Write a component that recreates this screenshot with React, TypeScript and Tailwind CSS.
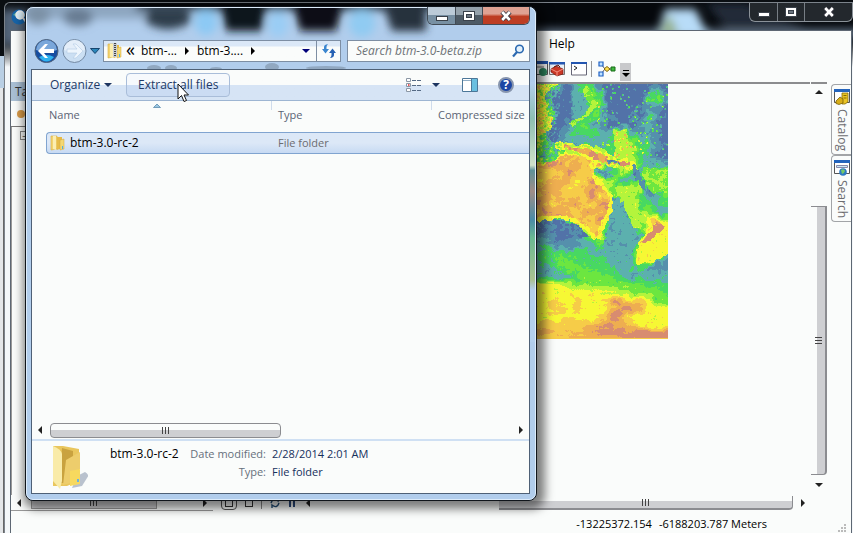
import type { ReactNode } from "react";

const PALETTE = ["#5272a8", "#5590ac", "#5cb0ae", "#48d862", "#6ce640", "#b4f43c", "#f6f834", "#f6cc48", "#eeae50", "#d88c70"];

// Sea floor heights as palette steps, one digit for every 8 pixels.
const HEIGHTS = [
  "76510243000000000",
  "74110224300000130",
  "65000224400000342",
  "75100223400001110",
  "77200224310010310",
  "63101342100001210",
  "62012333225421210",
  "54012222232552210",
  "43322233233553310",
  "42355555532653200",
  "45577788826562222",
  "77778872223532344",
  "78878877654224345",
  "88888877653555024",
  "88888888644454124",
  "78788888612553323",
  "55567888612255422",
  "11123578522235685",
  "00012567422224687",
  "11100134522212866",
  "22111122422222876",
  "23333332222225663",
  "23344333322225521",
  "22234443332223111",
  "22222344443222222",
  "66655444444444333",
  "66666666655544443",
  "66766766679777644",
  "66776766678998666",
  "66666666789766666",
  "67777778898876666",
  "88877788999999999",
  "77777888888999999",
];

type Shape = { step: number; points: [number, number][] };

// Coasts and ridges that need a sharper edge than the grid above gives.
const SHAPES: Shape[] = [
  { step: 6, points: [[0, 0], [17, 2], [7, 11], [8, 28], [16, 34], [14, 45], [0, 52]] },
  { step: 1.8, points: [[36, 6], [47, 9], [49, 30], [36, 34]] },
  { step: 4.6, points: [[49, 0], [56, 9], [60, 22], [54, 31], [35, 41], [34, 37], [49, 31], [53, 21], [47, 6]] },
  { step: 5, points: [[77, 46], [90, 46], [95, 73], [79, 74]] },
  { step: 4.4, points: [[106, 83], [132, 84], [132, 106], [116, 110], [108, 96]] },
  { step: 1.8, points: [[76, 113], [84, 113], [94, 139], [100, 163], [84, 176], [67, 163], [74, 129]] },
  { step: 5, points: [[77, 103], [94, 100], [103, 120], [105, 146], [97, 142], [86, 119]] },
  { step: 0.4, points: [[0, 137], [21, 135], [38, 139], [54, 153], [34, 151], [0, 146]] },
  { step: 6.2, points: [[0, 80], [14, 78], [30, 66], [54, 70], [61, 79], [56, 88], [66, 99], [76, 111], [76, 126], [69, 140], [64, 155], [57, 155], [49, 145], [34, 136], [21, 134], [0, 137]] },
  { step: 7.8, points: [[0, 84], [30, 70], [53, 74], [54, 86], [60, 98], [73, 112], [71, 127], [63, 142], [60, 152], [51, 141], [34, 132], [0, 132]] },
  { step: 5.6, points: [[20, 57], [60, 62], [78, 73], [96, 77], [102, 86], [90, 84], [66, 81], [56, 76], [20, 64]] },
  { step: 8.6, points: [[27, 60], [57, 66], [72, 75], [92, 79], [92, 81], [68, 79], [56, 72], [27, 63]] },
  { step: 1, points: [[67, 74], [79, 77], [84, 80], [72, 79]] },
  { step: 1.6, points: [[56, 85], [70, 85], [79, 93], [66, 93]] },
  { step: 0.8, points: [[96, 80], [104, 88], [108, 100], [112, 108], [106, 104], [98, 92]] },
  { step: 6, points: [[99, 180], [102, 159], [119, 136], [132, 139], [132, 168], [117, 178]] },
  { step: 8.8, points: [[104, 159], [116, 146], [119, 134], [129, 143], [110, 158]] },
];

const MAP_WIDTH = 132;
const MAP_HEIGHT = 255;

function hash(x: number, y: number) {
  let h = (x * 374761393 + y * 668265263) | 0;
  h = Math.imul(h ^ (h >>> 13), 1274126177);
  return ((h ^ (h >>> 16)) >>> 0) / 4294967296;
}

function noise(x: number, y: number) {
  const ix = Math.floor(x);
  const iy = Math.floor(y);
  const fx = x - ix;
  const fy = y - iy;
  const a = hash(ix, iy) * (1 - fx) + hash(ix + 1, iy) * fx;
  const b = hash(ix, iy + 1) * (1 - fx) + hash(ix + 1, iy + 1) * fx;
  return a * (1 - fy) + b * fy - 0.5;
}

function sample(x: number, y: number) {
  const gx = Math.max(0, Math.min(15.99, x / 8));
  const gy = Math.max(0, Math.min(31.99, y / 8));
  const ix = Math.floor(gx);
  const iy = Math.floor(gy);
  const fx = gx - ix;
  const fy = gy - iy;
  const v = (r: number, c: number) => Number(HEIGHTS[r][c]);
  return (v(iy, ix) * (1 - fx) + v(iy, ix + 1) * fx) * (1 - fy) + (v(iy + 1, ix) * (1 - fx) + v(iy + 1, ix + 1) * fx) * fy;
}

function inside(points: [number, number][], x: number, y: number) {
  let hit = false;
  for (let i = 0, j = points.length - 1; i < points.length; j = i++) {
    const [xi, yi] = points[i];
    const [xj, yj] = points[j];
    if (yi > y !== yj > y && x < ((xj - xi) * (y - yi)) / (yj - yi) + xi) hit = !hit;
  }
  return hit;
}

function stepAt(x: number, y: number) {
  if (y > MAP_HEIGHT - 2) return 7;
  const polar = y > 198;
  const wx = x + noise(x / 5, y / 5) * 7;
  const wy = y + noise(x / 5 + 40, y / 5 + 9) * (polar ? 4 : 7);
  let h = sample(wx, wy);
  const sx = Math.max(1, x + noise(x / 3, y / 3) * 4);
  const sy = Math.max(1, y + noise(x / 3 + 20, y / 3 + 5) * 4);
  for (const shape of SHAPES) if (inside(shape.points, sx, sy)) h = shape.step;
  h += noise(x / (polar ? 7 : 3), y / 2.2) * 1.3;
  if (h > 7 && !polar) h += noise(x / 8 + 3, y / 8 + 3) * 2.6;
  if (y < 75 && x > 60 && hash(x >> 1, y >> 1) > 0.93) h += 2.5 * hash(y, x) + 1;
  if (x < 24 && y < 80) h += noise(x / 1.5, y / 1.5) * 4;
  h += (hash(x, y) - 0.5) * 0.3;
  return Math.max(0, Math.min(9, Math.round(h)));
}

function buildTerrain() {
  const paths = PALETTE.map(() => "");
  for (let y = 0; y < MAP_HEIGHT; y++) {
    let start = 0;
    let last = stepAt(0, y);
    for (let x = 1; x <= MAP_WIDTH; x++) {
      const step = x < MAP_WIDTH ? stepAt(x, y) : -1;
      if (step !== last) {
        paths[last] += `M${start} ${y}h${x - start}v1h${start - x}z`;
        start = x;
        last = step;
      }
    }
  }
  return paths;
}

const TERRAIN = buildTerrain();

function Terrain() {
  return (
    <svg className="block h-[255px] w-[132px] shrink-0" viewBox="0 0 132 255" shapeRendering="crispEdges" role="img" aria-label="Bathymetry map">
      {TERRAIN.map((d, i) => (
        <path key={i} d={d} fill={PALETTE[i]} />
      ))}
    </svg>
  );
}

function Triangle({ dir, className = "fill-[#222]" }: { dir: "up" | "down" | "left" | "right"; className?: string }) {
  const d = { up: "M0 6L4 2L8 6z", down: "M0 2L4 6L8 2z", left: "M6 0L2 4L6 8z", right: "M2 0L6 4L2 8z" }[dir];
  return (
    <svg className={`size-2 shrink-0 ${className}`} viewBox="0 0 8 8" aria-hidden="true">
      <path d={d} />
    </svg>
  );
}

function Grip({ vertical = false }: { vertical?: boolean }) {
  return (
    <span className={`flex gap-px ${vertical ? "flex-col" : ""}`}>
      {[0, 1, 2].map((n) => (
        <span key={n} className={`border-[#444] ${vertical ? "h-0.5 w-[7px] border-t" : "h-[7px] w-0.5 border-l"}`} />
      ))}
    </span>
  );
}

function CaptionIcon({ kind }: { kind: "min" | "max" | "close" }) {
  return (
    <svg width="14" height="12" viewBox="0 0 14 12" aria-hidden="true">
      {kind === "min" && <rect x="1.5" y="6.5" width="11" height="4" fill="#fff" stroke="#3a414a" />}
      {kind === "max" && (
        <>
          <rect x="1.5" y="1.5" width="11" height="9" fill="#fff" stroke="#3a414a" />
          <rect x="4.5" y="4.5" width="5" height="3" fill="#6b7580" stroke="#3a414a" />
        </>
      )}
      {kind === "close" && (
        <>
          <path d="M3 2L11 10M11 2L3 10" stroke="#3a3a44" strokeWidth="4.5" />
          <path d="M3.2 2L10.8 10M10.8 2L3.2 10" stroke="#fff" strokeWidth="2.6" />
        </>
      )}
    </svg>
  );
}

function BackWindow() {
  return (
    <section className="absolute top-[2px] right-0 bottom-0 left-1 flex flex-col overflow-hidden rounded-tl-md border-t border-l border-[#7c838b] bg-gradient-to-b from-[#05080c] from-[34px] to-[#f4f7f9] to-[64px]">
      <svg className="absolute top-0 left-0 h-14 w-full" aria-hidden="true">
        <defs>
          <filter id="glass-back" x="-40%" y="-60%" width="180%" height="220%">
            <feGaussianBlur stdDeviation="4" />
          </filter>
        </defs>
        <g filter="url(#glass-back)">
          <rect x="-5" y="6" width="32" height="36" fill="#53657a" />
          <rect x="500" y="26" width="360" height="9" fill="#66788c" />
          <path d="M652 34L660 6H690L704 34z" fill="#b8dcf8" />
          <path d="M654 32L664 10L674 32z" fill="#94b088" />
          <path d="M700 0H740L800 24H720z" fill="#202a38" />
        </g>
      </svg>
      <header className="relative flex h-[27px] shrink-0 items-start justify-between pl-1.5">
        <svg className="mt-1.5 size-4" viewBox="0 0 16 16" aria-hidden="true">
          <circle cx="8" cy="8" r="7.5" fill="#1764a8" />
          <path d="M2 6q5-6 12 0q-3 4-12 0z" fill="#5fae9c" />
          <circle cx="9" cy="6" r="4" fill="#d9eef8" stroke="#eee" strokeWidth="1.5" />
          <path d="M12 9L15 13" stroke="#ddd" strokeWidth="2" />
        </svg>
        <div className="flex h-[19px] rounded-b-md border border-t-0 border-[#8b9299] bg-[#23282d]">
          <button aria-label="Minimize main window" className="flex w-7 items-center justify-center border-r border-[#777e85]"><CaptionIcon kind="min" /></button>
          <button aria-label="Maximize main window" className="flex w-[27px] items-center justify-center border-r border-[#777e85]"><CaptionIcon kind="max" /></button>
          <button aria-label="Close main window" className="flex w-[47px] items-center justify-center"><CaptionIcon kind="close" /></button>
        </div>
      </header>
      <div className="relative mr-px ml-[5px] flex flex-1 flex-col border border-b-0 border-[#5d6773] bg-[#fafcfb]">
        <nav className="flex h-[26px] shrink-0 items-center pl-[538px] text-black"><button>Help</button></nav>
        <div className="flex h-[25px] shrink-0 items-center pb-0.5 pl-[521px]">
          <svg width="16" height="16" viewBox="0 0 16 16" aria-hidden="true">
            <path d="M.5.5h15v13H.5z" fill="#fff" stroke="#555" /><path d="M0 0h16v3H0z" fill="#2456b0" /><circle cx="11" cy="11" r="4" fill="#2f8a62" /><path d="M4 6h8" stroke="#777" />
          </svg>
          <svg className="ml-px" width="16" height="16" viewBox="0 0 16 16" aria-hidden="true">
            <path d="M.5 1.500h15v12H.5z" fill="#e8f0f8" stroke="#777" /><path d="M0 1h16v2.500H0z" fill="#2456b0" />
            <path d="M2 8l5-3 7 3v5l-6 2-6-4z" fill="#cc3826" stroke="#74170f" strokeWidth=".7" /><path d="M2 8l6 3 6-3M8 11v4" fill="none" stroke="#f49080" /><path d="M5 6l4-2 2 2" fill="none" stroke="#631810" />
          </svg>
          <svg className="ml-1.5" width="16" height="14" viewBox="0 0 16 14" aria-hidden="true">
            <path d="M.5.5h15v12.500H.5z" fill="#fff" stroke="#667" /><path d="M0 0h16v2H0z" fill="#2456b0" /><path d="M3 4l3 2-3 2" fill="none" stroke="#222" />
          </svg>
          <span className="ml-1 h-4 w-px bg-[#999]" />
          <svg className="ml-1.5" width="18" height="16" viewBox="0 0 18 16" aria-hidden="true">
            <path d="M3 3l4 5M3 13l4-5h7" stroke="#555" fill="none" />
            <path d="M1 1h4v4H1zM1 11h4v4H1z" fill="#bfe2ff" stroke="#1f61c4" strokeWidth="1.200" /><path d="M6 8l3-2.500L12 8l-3 2.500z" fill="#ffdf4a" stroke="#7e6512" /><path d="M13 6h4v4h-4z" fill="#3fb93f" stroke="#176b17" />
          </svg>
          <button aria-label="Toolbar options" className="mt-1.5 ml-1 flex h-[18px] w-[11px] flex-col items-center justify-end bg-[#c8c9cb] pb-0.5">
            <span className="h-px w-1.5 bg-black" /><Triangle dir="down" className="fill-black" />
          </button>
        </div>
        <div className="flex flex-1">
          <aside className="flex w-[202px] flex-col">
            <h2 className="flex h-[19px] items-center bg-[#a9bfd4] pl-1 text-[#333]">Table</h2>
            <div className="flex h-[26px] items-center border-b border-[#777] pl-1.5"><span className="size-2 rounded-full bg-[#d89a48]" /></div>
            <div className="flex-1 border-l border-[#999] pt-1 pl-2"><span className="block size-[9px] border border-[#888] text-center text-[8px] leading-[7px]">−</span></div>
            <div className="flex h-4 items-center border-b border-[#999] pl-1">
              <Triangle dir="left" />
              <span className="ml-2 flex h-3 w-[126px] items-center justify-center border border-[#999] bg-[#d2d2d4]"><Grip /></span>
              <span className="ml-auto pr-1"><Triangle dir="right" /></span>
            </div>
          </aside>
          <main className="ml-1 flex min-w-0 flex-1 flex-col">
            <div className="flex min-h-0 flex-1">
              <div className="min-w-0 flex-1 border-t-2 border-[#8b8c8e] pl-[319px]"><Terrain /></div>
              <div className="ml-px flex w-4 flex-col items-center border-t-2 border-[#8b8c8e] pt-1">
                <Triangle dir="up" />
                <div className="mt-[110px] ml-auto flex w-full flex-1 items-center justify-center rounded-br border-y border-r-2 border-[#8b8c90] bg-gradient-to-r from-[#fafcfb] from-45% to-[#cecfd2] to-45%"><Grip vertical /></div>
                <span className="my-1.5 flex"><Triangle dir="down" /></span>
              </div>
            </div>
            <div className="flex h-4 items-center text-[#234]">
              <span className="ml-1 flex h-3.5 w-4 items-center justify-center rounded-sm border border-[#555]"><span className="size-2 border border-[#333]" /></span>
              <span className="ml-2 h-2 w-2 border border-[#333]" />
              <span className="ml-2 h-3 w-px bg-[#888]" />
              <svg className="ml-2" width="10" height="10" viewBox="0 0 10 10" aria-hidden="true"><path d="M1 5q2-6 7-2V0M9 5q-2 6-7 2v3" fill="none" stroke="#234e78" strokeWidth="1.400" /></svg>
              <svg className="ml-2" width="8" height="8" viewBox="0 0 8 8" aria-hidden="true"><path d="M1 0h2v8H1zM5 0h2v8H5z" fill="#2c4a7c" /></svg>
              <span className="ml-2 flex"><Triangle dir="left" /></span>
              <div className="ml-auto flex h-3.5 w-[294px] items-center justify-center rounded-br border-r border-b-2 border-[#8b8c90] bg-gradient-to-b from-[#fafcfb] from-45% to-[#cecfd2] to-45%"><Grip /></div>
              <span className="mr-5 ml-1.5 flex"><Triangle dir="right" /></span>
            </div>
          </main>
          <aside className="ml-1 flex w-5 flex-col pt-0.5">
            <button className="flex h-[71px] w-full flex-col items-center rounded-l border border-r-0 border-[#a2a4a7] pt-1">
              <svg width="16" height="16" viewBox="0 0 16 16" className="shrink-0" aria-hidden="true">
                <path d="M.5.5h15v13H.5z" fill="#fff" stroke="#555" /><path d="M0 0h16v3H0z" fill="#2464bc" />
                <path d="M8 4h6v9l-3 2H8z" fill="#e9c424" stroke="#846a08" strokeWidth=".8" /><path d="M9.500 6.500h3M9.500 9h3" stroke="#846a08" /><path d="M2 12l4-4 3 2v4l-4 1.500-3-1z" fill="#d8ae18" stroke="#7a6108" strokeWidth=".8" />
              </svg>
              <span className="mt-1 leading-4 text-[#6c6c70] [writing-mode:vertical-rl]">Catalog</span>
            </button>
            <button className="flex h-[67px] w-full flex-col items-center rounded-l border border-r-0 border-[#a2a4a7] pt-1">
              <svg width="16" height="16" viewBox="0 0 16 16" className="shrink-0" aria-hidden="true">
                <path d="M.5.5h15v13H.5z" fill="#fff" stroke="#555" /><path d="M0 0h16v3H0z" fill="#2464bc" /><path d="M2.500 5.500h11v2h-11z" fill="#c9eaf4" stroke="#88a" /><circle cx="9" cy="12" r="3.800" fill="#2d7ac2" /><path d="M7 10q3-2 4 1q-1 3-3 3z" fill="#75ca68" />
              </svg>
              <span className="mt-1 leading-4 text-[#6c6c70] [writing-mode:vertical-rl]">Search</span>
            </button>
          </aside>
        </div>
        <footer className="flex h-[22px] shrink-0 items-center justify-end gap-[7px] pt-1 pr-1 text-[11px] text-black">
          <span>-13225372.154</span>
          <span>-6188203.787 Meters</span>
          <svg className="mt-2 ml-16" width="9" height="9" viewBox="0 0 9 9" aria-hidden="true"><path d="M6 0h2v2H6zM3 3h2v2H3zM6 3h2v2H6zM0 6h2v2H0zM3 6h2v2H3zM6 6h2v2H6z" fill="#bbb" /></svg>
        </footer>
      </div>
    </section>
  );
}

function FrontGlass() {
  return (
    <svg className="absolute top-0 left-0 h-full w-full" aria-hidden="true">
      <defs>
        <filter id="glass-front" x="-40%" y="-60%" width="180%" height="220%">
          <feGaussianBlur stdDeviation="4" />
        </filter>
        <linearGradient id="glass-edge" x1="0" y1="0" x2="0" y2="1">
          <stop offset="0" stopColor="#b4cfee" /><stop offset=".14" stopColor="#8dbfb2" /><stop offset=".32" stopColor="#cfe0c8" />
          <stop offset=".34" stopColor="#5f9298" /><stop offset=".42" stopColor="#a08e88" /><stop offset=".53" stopColor="#4a8ca6" />
          <stop offset=".6" stopColor="#6aba92" /><stop offset=".76" stopColor="#aac090" /><stop offset=".8" stopColor="#b4d0ee" />
        </linearGradient>
      </defs>
      <g filter="url(#glass-front)">
        <path d="M-5 -8H120V12H-5z" fill="#8da6c0" />
        <ellipse cx="52" cy="10" rx="15" ry="9" fill="#687c92" />
        <ellipse cx="12" cy="8" rx="12" ry="10" fill="#7c91a6" />
        <ellipse cx="142" cy="11" rx="23" ry="11" fill="#2f3d4c" />
        <path d="M110 -10H480V4H110z" fill="#3a4b5c" />
        <path d="M192 -12H242L236 24H200z" fill="#0c131b" />
        <path d="M264 -12H320L310 24H274z" fill="#0a1119" />
        <path d="M354 -12H400V24H366z" fill="#28333c" />
        <ellipse cx="180" cy="15" rx="11" ry="13" fill="#8cc9f4" />
        <ellipse cx="252" cy="17" rx="10" ry="13" fill="#9acdf5" />
        <ellipse cx="336" cy="16" rx="13" ry="14" fill="#90cbf2" />
      </g>
      <g fill="#7d90a6" opacity=".6">
        <ellipse cx="128" cy="61" rx="7" ry="3" /><ellipse cx="145" cy="61" rx="6" ry="3" /><ellipse cx="246" cy="60" rx="7" ry="4" /><ellipse cx="190" cy="62" rx="6" ry="2" /><ellipse cx="300" cy="61" rx="20" ry="2" />
      </g>
      <rect x="504" y="75" width="5" height="260" fill="url(#glass-edge)" />
    </svg>
  );
}

function Crumb({ children }: { children: ReactNode }) {
  return (
    <button className="flex items-center gap-1.5 text-black">
      {children}
      <Triangle dir="right" className="fill-black" />
    </button>
  );
}

function SmallFolder({ zip = false }: { zip?: boolean }) {
  return (
    <svg width="15" height="16" viewBox="0 0 15 16" className="shrink-0" aria-hidden="true">
      <path d="M1 1h6v13l-6 1z" fill="#f2d472" stroke="#d9ad3e" strokeWidth=".6" />
      <path d="M7 2h5v11l-5 2z" fill="#e6bb48" /><path d="M3 1h3v14l-3-1z" fill="#fbeeb2" />
      <path d="M10 5l4-1v10l-4 1z" fill="#f4d873" stroke="#d5a938" strokeWidth=".5" /><path d="M12 11h1v3h-1z" fill="#55aee0" />
      {zip && <><path d="M6 0h4v14H6z" fill="#c9cdd2" /><path d="M8 0v14" stroke="#444" strokeWidth="2" strokeDasharray="1 1" /></>}
    </svg>
  );
}

function ExplorerWindow() {
  return (
    <section className="absolute top-[6px] left-[25px] flex h-[495px] w-[512px] flex-col overflow-hidden rounded-lg border border-[#10151b] bg-[#b1cdec] pr-1.5 pb-1.5 pl-[5px] shadow-[3px_3px_10px_5px_rgba(0,0,0,0.5)]">
      <FrontGlass />
      <div className="pointer-events-none absolute inset-0 rounded-[7px] border border-[#dcebfa]" />
      <header className="relative flex h-8 shrink-0 items-start justify-end">
        <div className="flex h-[18px] overflow-hidden rounded-b-md border border-t-0 border-[#424b55]">
          <button aria-label="Minimize" className="flex w-7 items-center justify-center border-r border-[#424b55] bg-gradient-to-b from-[#bccbd8] from-45% to-[#7890a3] to-50%"><CaptionIcon kind="min" /></button>
          <button aria-label="Maximize" className="flex w-[27px] items-center justify-center border-r border-[#424b55] bg-gradient-to-b from-[#95a2ac] from-45% to-[#4d5a65] to-50%"><CaptionIcon kind="max" /></button>
          <button aria-label="Close" className="flex w-[46px] items-center justify-center bg-gradient-to-b from-[#dfa293] from-40% to-[#bd3d23] to-55%"><CaptionIcon kind="close" /></button>
        </div>
      </header>
      <div className="relative flex h-6 shrink-0 items-center pl-[3px]">
        <button aria-label="Back">
          <svg width="25" height="26" viewBox="0 0 25 26" aria-hidden="true">
            <circle cx="12.500" cy="13" r="11.500" fill="#174da0" stroke="#52657c" /><path d="M2 12a10.500 10 0 0 1 21 0q-10 4-21 0z" fill="#7aa7da" /><path d="M5 19q7.500 9 15 0q-7-4-15 0z" fill="#2fb2ef" />
            <path d="M4 13l7-7h3l-4 5h10v4H10l4 5h-3z" fill="#fff" />
          </svg>
        </button>
        <button aria-label="Forward" className="ml-[3px]">
          <svg width="25" height="26" viewBox="0 0 25 26" aria-hidden="true">
            <circle cx="12.500" cy="13" r="11.500" fill="#cbdff3" stroke="#7288a2" /><path d="M2 12a10.500 10 0 0 1 21 0q-10 4-21 0z" fill="#e4eef9" />
            <path d="M21 13l-7-7h-3l4 5H5v4h10l-4 5h3z" fill="#edf5fd" stroke="#b4cbe4" strokeWidth=".6" />
          </svg>
        </button>
        <button aria-label="Recent pages" className="ml-[3px]">
          <svg width="10" height="8" viewBox="0 0 10 8" aria-hidden="true"><path d="M.5 1.500h9L5 6.500z" fill="#2b86ba" stroke="#17456e" /></svg>
        </button>
        <div className="ml-[3px] flex h-[22px] w-[238px] items-center border border-[#7d8ea3] bg-gradient-to-b from-[#dbe8f7] from-25% to-[#fafcfb] to-30% pl-[3px]">
          <SmallFolder zip />
          <span className="-mt-1 ml-1 text-[18px] leading-4 text-black">«</span>
          <div className="ml-1.5 flex gap-1.5">
            <Crumb>btm-...</Crumb>
            <Crumb>btm-3....</Crumb>
          </div>
          <button aria-label="Previous locations" className="mr-1.5 ml-auto"><Triangle dir="down" className="fill-[#00007a]" /></button>
          <button aria-label="Refresh" className="flex h-full w-6 items-center justify-center border-l border-[#7d8ea3]">
            <svg width="14" height="14" viewBox="0 0 14 14" aria-hidden="true"><path d="M0 5h2V3q0-2.500 4-3Q4.500 1.500 4.500 3v2H7L3.500 9.500z" fill="#3b86cf" /><path d="M14 9h-2v2q0 2.500-4 3q1.500-1.500 1.500-3V9H7l3.500-4.500z" fill="#2561b4" /></svg>
          </button>
        </div>
        <label className="ml-1.5 flex h-[22px] min-w-0 flex-1 items-center border border-[#7d8ea3] bg-[#fafcfb] pr-1">
          <input type="text" aria-label="Search" placeholder="Search btm-3.0-beta.zip" className="min-w-0 flex-1 bg-transparent pl-2 italic outline-none placeholder:text-[#6e7378]" />
          <svg width="14" height="14" viewBox="0 0 14 14" aria-hidden="true"><circle cx="8.500" cy="5" r="3.800" fill="#e3f1fb" stroke="#2b69b0" strokeWidth="1.600" /><path d="M6 8L2 12.500" stroke="#2b69b0" strokeWidth="2.200" /></svg>
        </label>
      </div>
      <div className="relative mt-1.5 flex flex-1 flex-col border border-[#4e6076] bg-[#fafcfb]">
        <div className="flex h-[31px] shrink-0 items-center border-b border-[#9db5d2] bg-gradient-to-b from-[#fafcfb] from-49% to-[#d6e4f5] to-50% pr-[15px] pl-[18px] text-[#223a66]">
          <button className="flex items-center gap-1">Organize <Triangle dir="down" className="fill-[#1d3560]" /></button>
          <button className="ml-3.5 h-6 w-[104px] rounded-sm border border-[#a9bdd9] bg-gradient-to-b from-[#f6f9fc] from-50% to-[#cbdcf3] to-50%">Extract all files</button>
          <button aria-label="Change your view" className="ml-auto flex items-center gap-2.5">
            <svg width="16" height="14" viewBox="0 0 16 14" aria-hidden="true">
              <path d="M.5.500h4v3h-4zM.5 5.500h4v3h-4zM.5 10.500h4v3h-4z" fill="#fff" stroke="#8b97a5" /><path d="M2 7h1.500" stroke="#d22" strokeWidth="1.500" /><path d="M6 2.500h10M6 7.500h10M6 12.500h10" stroke="#556a85" strokeDasharray="4 1" />
            </svg>
            <Triangle dir="down" className="fill-[#1d3560]" />
          </button>
          <button aria-label="Show the preview pane" className="ml-[22px]">
            <svg width="16" height="14" viewBox="0 0 16 14" aria-hidden="true"><path d="M.5.500h15v13H.5z" fill="#fff" stroke="#4c7798" /><path d="M1 2.500h14" stroke="#8fadc6" /><path d="M10 1h5v12h-5z" fill="#69bfe0" /><path d="M9.500 1v12" stroke="#4c7798" /></svg>
          </button>
          <button aria-label="Get help" className="ml-5 flex size-4 items-center justify-center rounded-full border-2 border-[#8795ad] bg-[#1c46a4] text-[12px] leading-3 font-bold text-white">?</button>
        </div>
        <table className="w-full table-fixed border-separate border-spacing-0 text-left text-[#5b6474]">
          <colgroup><col className="w-[239px]" /><col className="w-40" /><col /></colgroup>
          <thead className="text-[11px]">
            <tr className="h-[31px] align-top">
              <th className="relative pt-1.5 pl-[17px] font-normal">
                <svg className="absolute top-0.5 left-[121px]" width="8" height="5" viewBox="0 0 8 5" aria-hidden="true"><path d="M.5 4.500L4 1l3.500 3.500z" fill="#9ac6e0" stroke="#4c7fa4" strokeWidth=".7" /></svg>
                <span>Name</span>
              </th>
              <th className="relative pt-1.5 pl-[7px] font-normal before:absolute before:top-0 before:left-0 before:h-[9px] before:border-l before:border-[#cfdcec]">Type</th>
              <th className="relative pt-1.5 pl-[7px] font-normal whitespace-nowrap before:absolute before:top-0 before:left-0 before:h-[9px] before:border-l before:border-[#cfdcec]">Compressed size</th>
            </tr>
          </thead>
          <tbody>
            <tr className="h-[22px]">
              <td className="pl-3.5">
                <span className="flex h-[22px] items-center gap-[5px] rounded-l-sm border border-r-0 border-[#80a4d0] bg-gradient-to-b from-[#dce8f7] from-50% to-[#c7daf3] pl-[3px] text-black"><SmallFolder />btm-3.0-rc-2</span>
              </td>
              <td className="border-y border-[#80a4d0] bg-gradient-to-b from-[#dce8f7] from-50% to-[#c7daf3] pl-[7px] text-[11px] text-[#6c6c70]">File folder</td>
              <td className="border-y border-[#80a4d0] bg-gradient-to-b from-[#dce8f7] from-50% to-[#c7daf3]" />
            </tr>
          </tbody>
        </table>
        <div className="mt-auto flex h-4 shrink-0 items-center px-1">
          <Triangle dir="left" />
          <div className="ml-1.5 flex h-[15px] w-[231px] items-center justify-center rounded-sm border border-[#8b8c90] bg-gradient-to-b from-[#fafcfb] from-45% to-[#cecfd2] to-45%"><Grip /></div>
          <span className="ml-auto flex"><Triangle dir="right" /></span>
        </div>
        <footer className="mt-px flex h-[54px] shrink-0 border-t-2 border-[#cfe0f3] pl-5">
          <svg className="mt-1" width="38" height="45" viewBox="0 0 38 45" aria-hidden="true">
            <path d="M25 31l8-4q5 3 2 6l-5 8-10 2z" fill="#b9c2ce" />
            <path d="M1 1h10l16 3v32l-12 5H1z" fill="#e9c65d" /><path d="M10 3l11 3v20l-8 12H8z" fill="#c9a23f" />
            <path d="M14 15l14-8v17l-9 4v10l-8 2z" fill="#edcd6c" /><path d="M18 26l10-2v15l-10 2z" fill="#f7d95e" /><path d="M1 1q8 3 9 8v27l-2 8-7-8z" fill="#f9eba8" />
            <path d="M25 34h2v3h-2z" fill="#6db5dc" />
          </svg>
          <dl className="mt-1 ml-5 grid grid-cols-[156px_auto] content-start gap-x-1.5 text-[11px] leading-[18px] whitespace-nowrap text-[#16305c]">
            <dt className="flex items-baseline justify-between text-[#66707c]"><span className="text-[12px] text-black">btm-3.0-rc-2</span> <span>Date modified:</span></dt>
            <dd>2/28/2014 2:01 AM</dd>
            <dt className="text-right text-[#66707c]">Type:</dt>
            <dd>File folder</dd>
          </dl>
        </footer>
      </div>
    </section>
  );
}

export default function App() {
  return (
    <div className="relative h-screen w-full overflow-hidden bg-[#0a0e12] font-['Open_Sans','Noto_Sans',sans-serif] text-[12px] leading-4 select-none">
      <div className="flex h-full w-1 flex-col pt-14"><div className="h-8 bg-[#b9cfe4]" /><div className="flex-1 border-r border-[#666] bg-[#e4e6e8]" /></div>
      <BackWindow />
      <ExplorerWindow />
      <svg className="absolute top-[83px] left-[177px]" width="13" height="20" viewBox="0 0 13 20" aria-hidden="true"><path d="M1 1v15l3.500-3.500L7 18.500l2.500-1L7 12h4.500z" fill="#fff" stroke="#111" /></svg>
    </div>
  );
}
